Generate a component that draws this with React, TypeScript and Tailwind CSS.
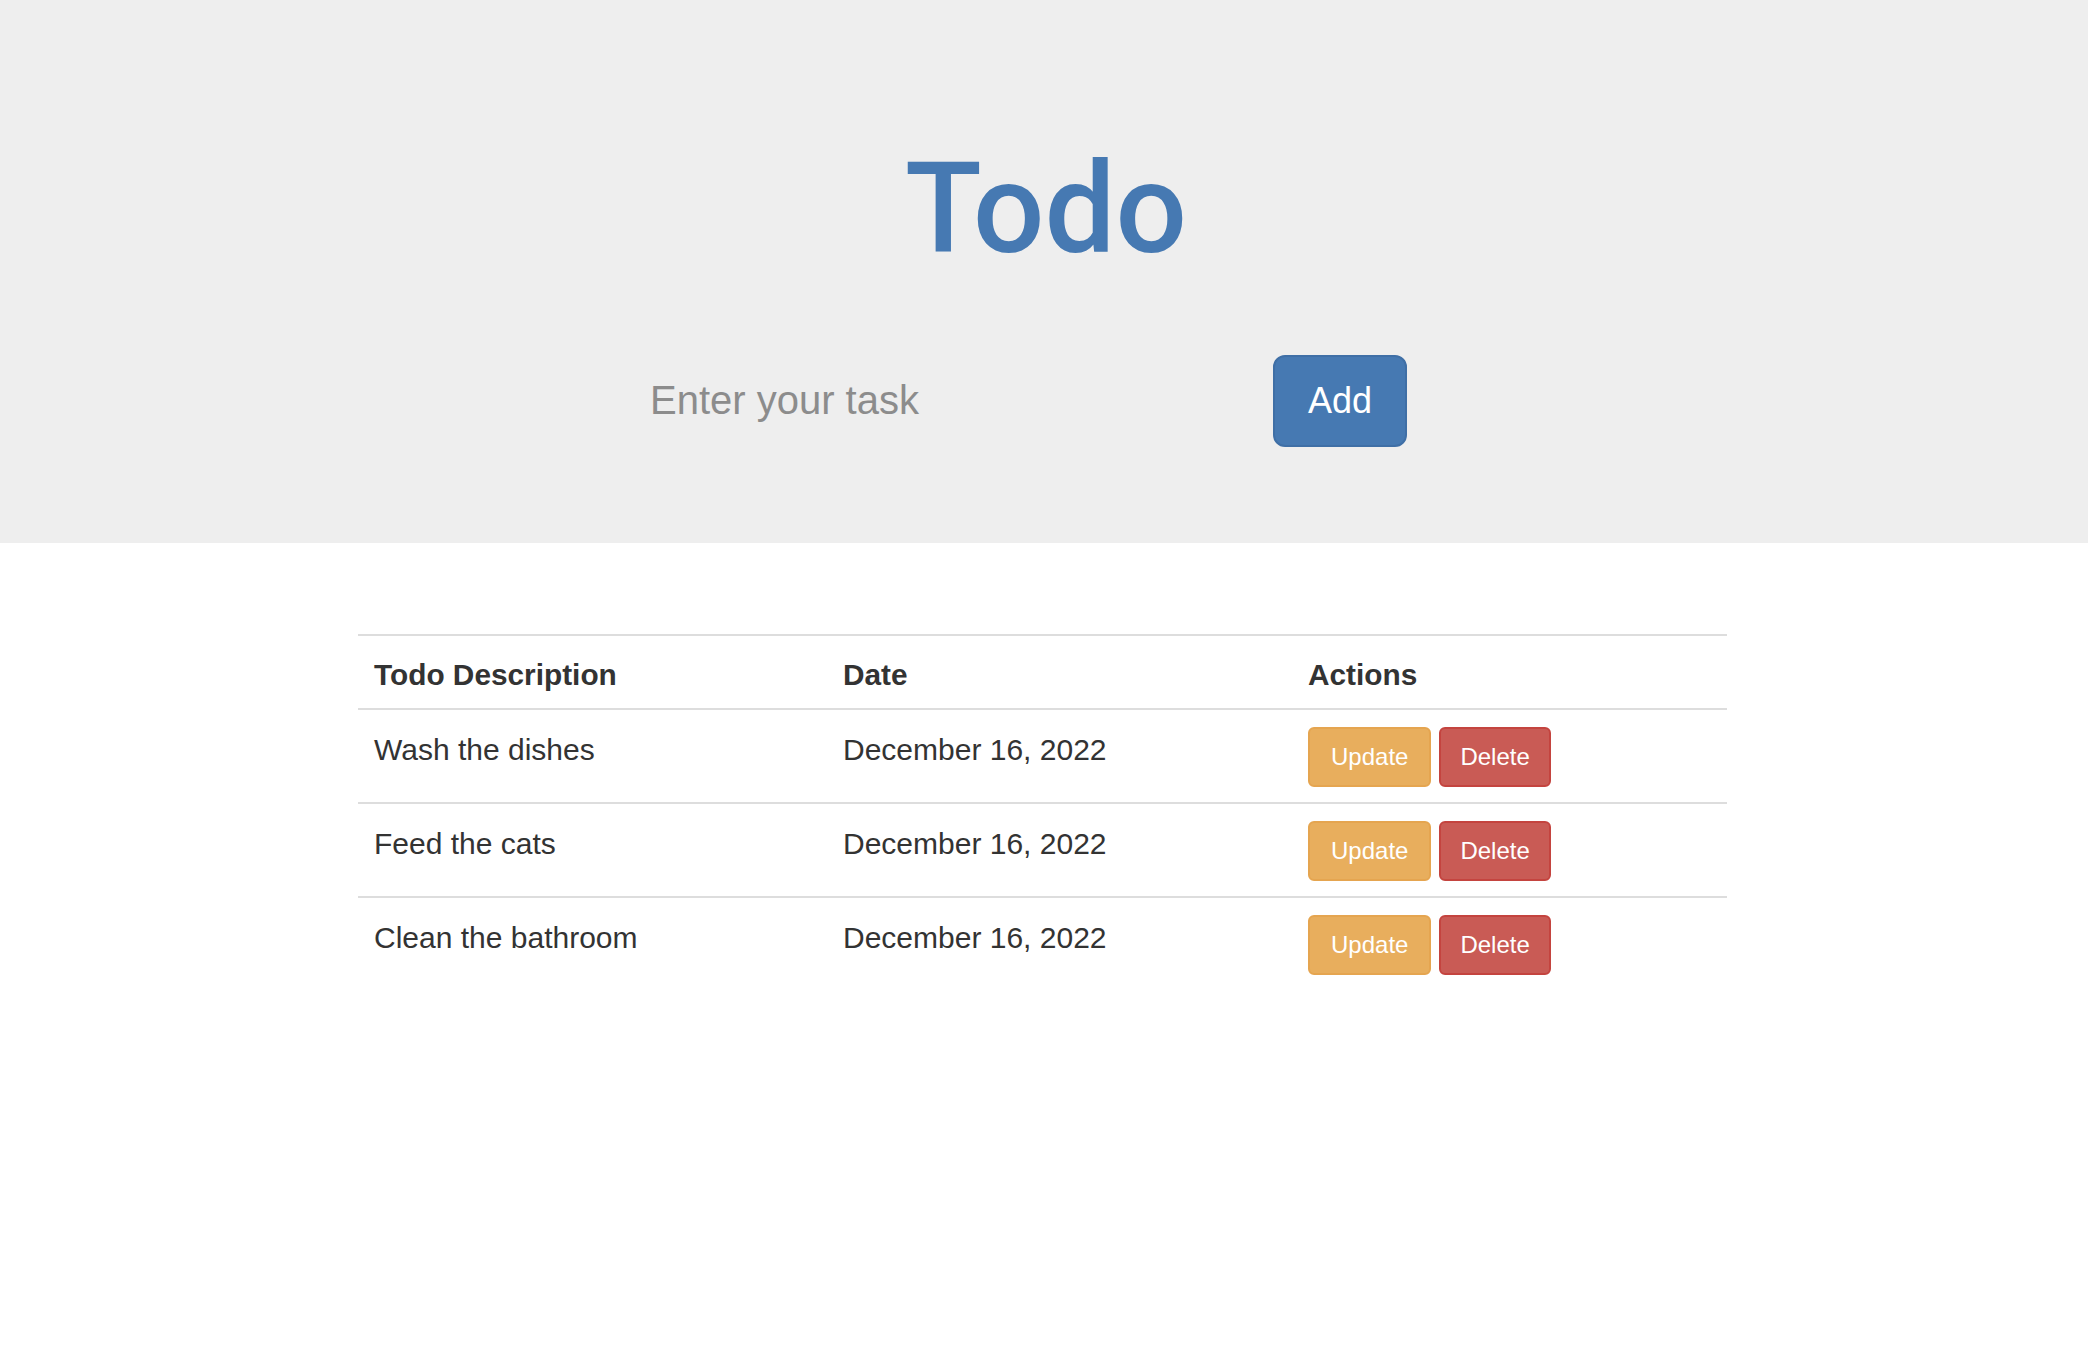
import React from "react";

const rows = [
  { desc: "Wash the dishes", date: "December 16, 2022" },
  { desc: "Feed the cats", date: "December 16, 2022" },
  { desc: "Clean the bathroom", date: "December 16, 2022" },
];

export default function App() {
  return (
    <div
      className="min-h-[1362px] w-full bg-white text-[#333333]"
      style={{ fontFamily: '"Liberation Sans", Arial, Helvetica, sans-serif' }}
    >
      <header className="bg-[#eeeeee] pt-[146px] pb-[96px]">
        <h1
          className="text-center text-[126px] leading-none font-medium text-[#4679b2] pl-[4px]"
          style={{ fontFamily: 'Roboto, "Liberation Sans", Arial, sans-serif' }}
        >
          Todo
        </h1>
        <div className="mt-[83px] flex justify-center pr-[61px] gap-[8px]">
          <input
            type="text"
            placeholder="Enter your task"
            className="h-[92px] w-[645px] bg-transparent px-[30px] pb-[2px] text-[40px] text-[#333] placeholder:text-[#8c8c8c] outline-none border-0"
          />
          <button className="h-[92px] rounded-[12px] border-2 border-[#3f6fa6] bg-[#4679b2] px-[33px] text-[36px] leading-[48px] text-white">
            Add
          </button>
        </div>
      </header>

      <main className="pt-[91px] pr-[3px]">
        <div className="mx-auto w-[1369px] text-[30px]">
          <div className="grid grid-cols-[469px_465px_435px] border-t-2 border-b-2 border-[#dddddd] font-bold text-[29.8px]">
            <div className="px-4 pt-[19px] pb-[13px] leading-[40px]">Todo Description</div>
            <div className="px-4 pt-[19px] pb-[13px] leading-[40px]">Date</div>
            <div className="px-4 pt-[19px] pb-[13px] leading-[40px]">Actions</div>
          </div>
          {rows.map((r, i) => (
            <div
              key={i}
              className={
                i === 0
                  ? "grid grid-cols-[469px_465px_435px]"
                  : "grid grid-cols-[469px_465px_435px] border-t-2 border-[#dddddd]"
              }
            >
              <div className="px-4 pt-[20px] pb-4 leading-[40px]">{r.desc}</div>
              <div className="px-4 pt-[20px] pb-4 leading-[40px]">{r.date}</div>
              <div className="flex gap-[8px] px-4 pt-[17px] pb-[15px] items-start">
                <button className="h-[60px] rounded-[6px] border-2 border-[#e5a550] bg-[#e8ae5d] px-[21px] text-[24px] leading-[36px] text-white">
                  Update
                </button>
                <button className="h-[60px] rounded-[6px] border-2 border-[#c4443f] bg-[#c95b55] px-[19px] text-[24px] leading-[36px] text-white">
                  Delete
                </button>
              </div>
            </div>
          ))}
        </div>
      </main>
    </div>
  );
}
